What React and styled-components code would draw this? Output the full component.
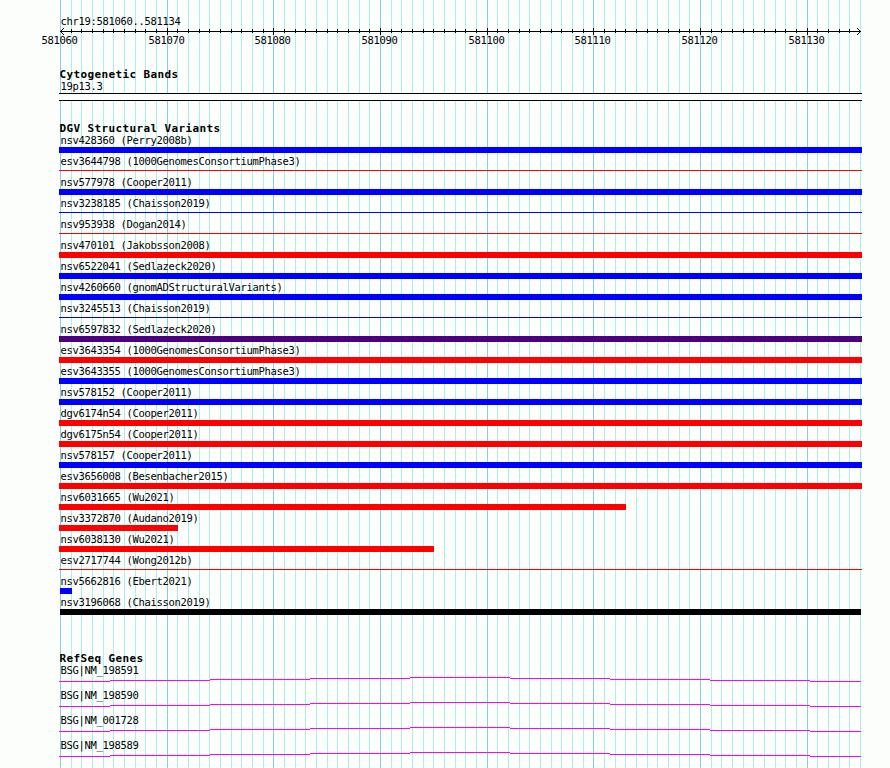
import styled, { createGlobalStyle } from "styled-components";

const GlobalStyle = createGlobalStyle`
    body {
        margin: 0;
        background: #fcfefc;
    }
`;

const Browser = styled.main`
    display: grid;
    width: 890px;
    height: 768px;
    overflow: hidden;
    color: #000;
    font-family: "DejaVu Sans Mono", "Liberation Mono", monospace;
    font-size: 10.5px;
    letter-spacing: -0.321px;
    white-space: pre;

    > * {
        grid-area: 1 / 1;
    }
`;

const Drawing = styled.svg`
    display: block;
    shape-rendering: crispEdges;
`;

const Tracks = styled.div`
    display: flex;
    flex-direction: column;
    padding: 13px 0 0 59px;
    z-index: 1;
`;

const Label = styled.div`
    height: 15px;
    line-height: 17px;
    padding-left: 1.4px;
`;

const Title = styled.h2`
    margin: 0;
    height: 12px;
    line-height: 17px;
    font-size: 11px;
    font-weight: bold;
    letter-spacing: 0.378px;
    padding-left: 0.5px;
`;

const Ruler = styled.header`
    height: 53px;
`;

const TickLabels = styled.div`
    display: flex;
    margin-left: -17.6px;
    height: 12px;
    line-height: 10px;
`;

const TickLabel = styled.span`
    flex: none;
    width: ${(props) => props.$width}px;
`;

const Track = styled.section`
    margin-bottom: ${(props) => props.$gap || 0}px;
`;

const Band = styled.div`
    box-sizing: border-box;
    width: 803px;
    height: 8px;
    border: solid #000;
    border-width: 1px 0;
    background: #fcfefc;
`;

const Slot = styled.div`
    height: 6px;
    display: flex;
    align-items: flex-start;
`;

const Bar = styled.div`
    width: ${(props) => props.$end - props.$start}px;
    height: ${(props) => (props.$thin ? 1 : 6)}px;
    margin-left: ${(props) => props.$start - 59}px;
    margin-top: ${(props) => (props.$thin ? 2 : 0)}px;
    background: ${(props) => props.$color};
`;

const Gene = styled.div`
    height: 25px;
`;

const red = "#ff0000";
const blue = "#0000ff";

const variants = [
    { name: "nsv428360 (Perry2008b)", color: blue },
    { name: "esv3644798 (1000GenomesConsortiumPhase3)", color: red, thin: true },
    { name: "nsv577978 (Cooper2011)", color: blue },
    { name: "nsv3238185 (Chaisson2019)", color: blue, thin: true },
    { name: "nsv953938 (Dogan2014)", color: "#ec0204", thin: true },
    { name: "nsv470101 (Jakobsson2008)", color: red },
    { name: "nsv6522041 (Sedlazeck2020)", color: blue },
    { name: "nsv4260660 (gnomADStructuralVariants)", color: blue },
    { name: "nsv3245513 (Chaisson2019)", color: "#0402dc", thin: true },
    { name: "nsv6597832 (Sedlazeck2020)", color: "#4b0082" },
    { name: "esv3643354 (1000GenomesConsortiumPhase3)", color: red },
    { name: "esv3643355 (1000GenomesConsortiumPhase3)", color: blue },
    { name: "nsv578152 (Cooper2011)", color: blue },
    { name: "dgv6174n54 (Cooper2011)", color: red },
    { name: "dgv6175n54 (Cooper2011)", color: red },
    { name: "nsv578157 (Cooper2011)", color: blue },
    { name: "esv3656008 (Besenbacher2015)", color: red },
    { name: "nsv6031665 (Wu2021)", color: red, end: 626 },
    { name: "nsv3372870 (Audano2019)", color: red, end: 178 },
    { name: "nsv6038130 (Wu2021)", color: red, end: 434 },
    { name: "esv2717744 (Wong2012b)", color: "#ec0204", thin: true },
    { name: "nsv5662816 (Ebert2021)", color: blue, start: 60, end: 72 },
    { name: "nsv3196068 (Chaisson2019)", color: "#040204", start: 60, end: 861 },
];

const genes = ["NM_198591", "NM_198590", "NM_001728", "NM_198589"];

// one position per base, 75 bases over 800px
const ticks = Array.from({ length: 76 }, (_, i) => 60 + Math.round((i * 800) / 75));
const majors = ticks.filter((_, i) => i % 10 === 0);

function Gridlines() {
    return (
        <Drawing width="890" height="768">
            {ticks.map((x, i) => (
                <rect
                    key={x}
                    x={x}
                    y="0"
                    width="1"
                    height="768"
                    fill={i % 10 === 0 ? "#84ceec" : "#aceeec"}
                />
            ))}
        </Drawing>
    );
}

function Axis() {
    return (
        <Drawing width="803" height="7">
            <rect x="1" y="3" width="801" height="1" />
            {ticks.slice(1, -1).map((x, i) =>
                (i + 1) % 10 === 0 ? (
                    <rect key={x} x={x - 59} y="0" width="1" height="7" />
                ) : (
                    <rect key={x} x={x - 59} y="1" width="1" height="4" />
                )
            )}
            <path d="M2 2h1v1h-1zM3 1h1v1h-1zM4 0h1v1h-1zM2 4h1v1h-1zM3 5h1v1h-1zM4 6h1v1h-1z" />
            <path d="M800 2h1v1h-1zM799 1h1v1h-1zM798 0h1v1h-1zM800 4h1v1h-1zM799 5h1v1h-1zM798 6h1v1h-1z" />
        </Drawing>
    );
}

// intron drawn as a shallow peak, one pixel per step
function Intron() {
    const edges = [0, 51, 151, 251, 351, 451, 551, 651, 751, 802];
    const levels = [4, 3, 2, 1, 0, 1, 2, 3, 4];

    return (
        <Drawing width="803" height="5" fill="#ff00ff">
            {levels.map((y, i) => (
                <rect key={i} x={edges[i]} y={y} width={edges[i + 1] - edges[i]} height="1" />
            ))}
        </Drawing>
    );
}

function App() {
    return (
        <>
            <GlobalStyle />
            <Browser>
                <Gridlines />
                <Tracks>
                    <Ruler>
                        <Label>chr19:581060..581134</Label>
                        <Axis />
                        <TickLabels>
                            {majors.map((x, i) => (
                                <TickLabel key={x} $width={(majors[i + 1] || x + 60) - x}>
                                    {581060 + i * 10}
                                </TickLabel>
                            ))}
                        </TickLabels>
                    </Ruler>

                    <Track $gap={19}>
                        <Title>Cytogenetic Bands</Title>
                        <Label>19p13.3</Label>
                        <Band />
                    </Track>

                    <Track $gap={35}>
                        <Title>DGV Structural Variants</Title>
                        {variants.map(({ name, color, thin, start = 59, end = 862 }) => (
                            <div key={name}>
                                <Label>{name}</Label>
                                <Slot>
                                    <Bar $color={color} $thin={thin} $start={start} $end={end} />
                                </Slot>
                            </div>
                        ))}
                    </Track>

                    <Track>
                        <Title>RefSeq Genes</Title>
                        {genes.map((gene) => (
                            <Gene key={gene}>
                                <Label>BSG|{gene}</Label>
                                <Intron />
                            </Gene>
                        ))}
                    </Track>
                </Tracks>
            </Browser>
        </>
    );
}

export default App;
